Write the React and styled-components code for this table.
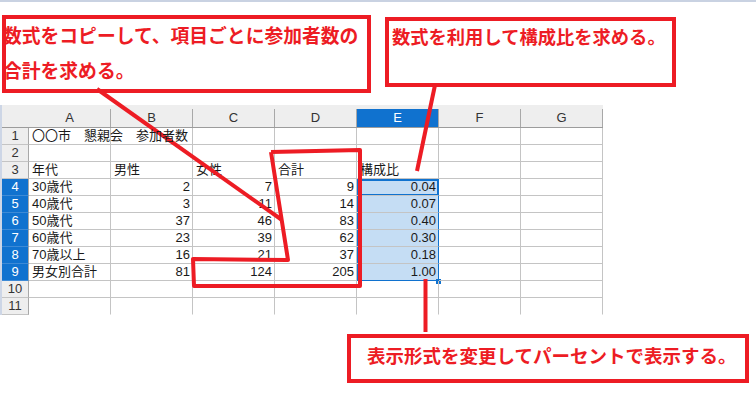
import React from 'react'
import styled, { createGlobalStyle } from 'styled-components'

const GlobalStyle = createGlobalStyle`
  html, body {
    margin: 0;
    padding: 0;
    background: #ffffff;
  }
  body {
    font-family: "Liberation Sans", "Noto Sans CJK JP", sans-serif;
  }
`

const RED = '#ed1c24'
const BLUE = '#1072cf'
const GRID = '#c4c4c4'

const columns = ['A', 'B', 'C', 'D', 'E', 'F', 'G']

const rows = [
  ['〇〇市　懇親会　参加者数', '', '', '', '', '', ''],
  ['', '', '', '', '', '', ''],
  ['年代', '男性', '女性', '合計', '構成比', '', ''],
  ['30歳代', 2, 7, 9, '0.04', '', ''],
  ['40歳代', 3, 11, 14, '0.07', '', ''],
  ['50歳代', 37, 46, 83, '0.40', '', ''],
  ['60歳代', 23, 39, 62, '0.30', '', ''],
  ['70歳以上', 16, 21, 37, '0.18', '', ''],
  ['男女別合計', 81, 124, 205, '1.00', '', ''],
  ['', '', '', '', '', '', ''],
  ['', '', '', '', '', '', ''],
]

const selFirst = 4
const selLast = 9

const Frame = styled.div`
  position: relative;
  display: flex;
  flex-direction: column;
  align-items: flex-start;
  width: 756px;
  height: 398px;
  border-top: 2px solid #c9d2e2;
  box-sizing: border-box;
  overflow: hidden;
`

const TopRow = styled.div`
  display: flex;
  align-items: flex-start;
  gap: 14px;
  padding: 13px 0 0 2px;
`

const SheetWrap = styled.div`
  margin-top: 12px;
  width: 604px;
  border-left: 2px solid #cdd6e6;
`

const Sheet = styled.div`
  display: grid;
  grid-template-columns: 27px repeat(7, 82px);
  grid-auto-rows: 17px;
  grid-template-rows: 23px;
`

const ColHeader = styled.div`
  display: flex;
  align-items: flex-end;
  background: #eeeeee;
  border-bottom: 1px solid #9c9c9c;
  box-sizing: border-box;
`

const ColLabel = styled.div`
  flex: 1;
  height: 18px;
  line-height: 18px;
  text-align: center;
  font-size: 13px;
  color: ${p => (p.$active ? '#ffffff' : '#333333')};
  background: ${p => (p.$active ? BLUE : 'transparent')};
  border-right: 1px solid ${p => (p.$corner ? 'transparent' : '#a8a8a8')};
  box-sizing: border-box;
`

const RowHeader = styled.div`
  background: ${p => (p.$active ? BLUE : '#eeeeee')};
  color: ${p => (p.$active ? '#ffffff' : '#333333')};
  border-right: 1px solid #a8a8a8;
  border-bottom: 1px solid ${p => (p.$active ? '#3d8ad6' : GRID)};
  box-sizing: border-box;
  font-size: 13px;
  line-height: 16px;
  text-align: center;
`

const Cell = styled.div`
  position: relative;
  box-sizing: border-box;
  border-right: 1px solid ${p => (p.$selected ? BLUE : GRID)};
  border-bottom: 1px solid ${p => (p.$last ? 'transparent' : p.$selEnd ? BLUE : GRID)};
  background: ${p => (p.$selected ? '#c5ddf4' : 'transparent')};
  box-shadow: ${p =>
    p.$activeCell
      ? `inset 0 0 0 1px ${BLUE}, inset 1px 0 0 ${BLUE}`
      : p.$selected
      ? `inset 1px 0 0 ${BLUE}`
      : 'none'};
  outline: ${p => (p.$activeCell ? `1px solid ${BLUE}` : 'none')};
  outline-offset: -2px;
  font-size: 13px;
  line-height: 16px;
  color: #1a1a1a;
  padding: 0 2px 0 3px;
  text-align: ${p => (p.$num ? 'right' : 'left')};
  white-space: nowrap;
  z-index: ${p => (p.$overflow ? 1 : 0)};
`

const FillHandle = styled.span`
  position: absolute;
  right: -3px;
  bottom: -4px;
  width: 5px;
  height: 5px;
  background: ${BLUE};
`

const Marks = styled.svg`
  position: absolute;
  left: 0;
  top: -2px;
  pointer-events: none;
`

const Callout = styled.div`
  flex: none;
  margin: ${p => p.$margin || 0};
  width: ${p => p.$w}px;
  height: ${p => p.$h}px;
  border: 4px solid ${RED};
  box-sizing: border-box;
  background: #ffffff;
  color: ${RED};
  font-family: "Noto Sans CJK JP", sans-serif;
  font-weight: 700;
  font-size: ${p => p.$size}px;
  line-height: ${p => p.$lh}px;
  padding: ${p => p.$pad};
  white-space: nowrap;
`

const CalloutText = styled.div`
  margin: ${p => p.$shift || 0};
`

function isNum(v) {
  return typeof v === 'number' || /^\d+\.\d+$/.test(v)
}

export default function App() {
  return (
    <>
      <GlobalStyle />
      <Frame>
        <TopRow>
          <Callout $w={369} $h={78} $size={18.8} $lh={35} $pad="0">
            <CalloutText $shift="-2px 0 0 -3px">
              数式をコピーして、項目ごとに参加者数の
              <br />
              合計を求める。
            </CalloutText>
          </Callout>
          <Callout $w={291} $h={70} $size={18.3} $lh={30} $pad="0 0 0 3px" $margin="2px 0 0 0">
            数式を利用して構成比を求める。
          </Callout>
        </TopRow>

        <SheetWrap>
          <Sheet>
            <ColHeader>
              <ColLabel $corner />
            </ColHeader>
            {columns.map(c => (
              <ColHeader key={c}>
                <ColLabel $active={c === 'E'}>{c}</ColLabel>
              </ColHeader>
            ))}
            {rows.map((r, i) => {
              const n = i + 1
              const inSel = n >= selFirst && n <= selLast
              return (
                <React.Fragment key={n}>
                  <RowHeader $active={inSel}>{n}</RowHeader>
                  {r.map((v, j) => {
                    const sel = j === 4 && inSel
                    return (
                      <Cell
                        key={j}
                        $num={isNum(v)}
                        $last={n === 11}
                        $overflow={n === 1 && j === 0}
                        $selected={sel}
                        $activeCell={sel && n === selFirst}
                        $selEnd={sel && n === selLast}
                      >
                        {v}
                        {sel && n === selLast && <FillHandle />}
                      </Cell>
                    )
                  })}
                </React.Fragment>
              )
            })}
          </Sheet>
        </SheetWrap>

        <Callout $w={402} $h={49} $size={18.5} $lh={34} $pad="3px 0 0 16px" $margin="19px 0 0 347px">
          <CalloutText $shift="-3px 0 0 0">表示形式を変更してパーセントで表示する。</CalloutText>
        </Callout>

        <Marks width="756" height="398" viewBox="0 0 756 398">
          <g stroke={RED} strokeWidth="4" fill="none" strokeLinejoin="round">
            <line x1="97" y1="89" x2="282" y2="220" />
            <polyline points="271,152 360,150 360,286 194,286 193,259 288,260 271,152" />
            <line x1="435" y1="85" x2="417" y2="171" />
            <line x1="425.5" y1="279" x2="425.5" y2="332" />
          </g>
        </Marks>
      </Frame>
    </>
  )
}
